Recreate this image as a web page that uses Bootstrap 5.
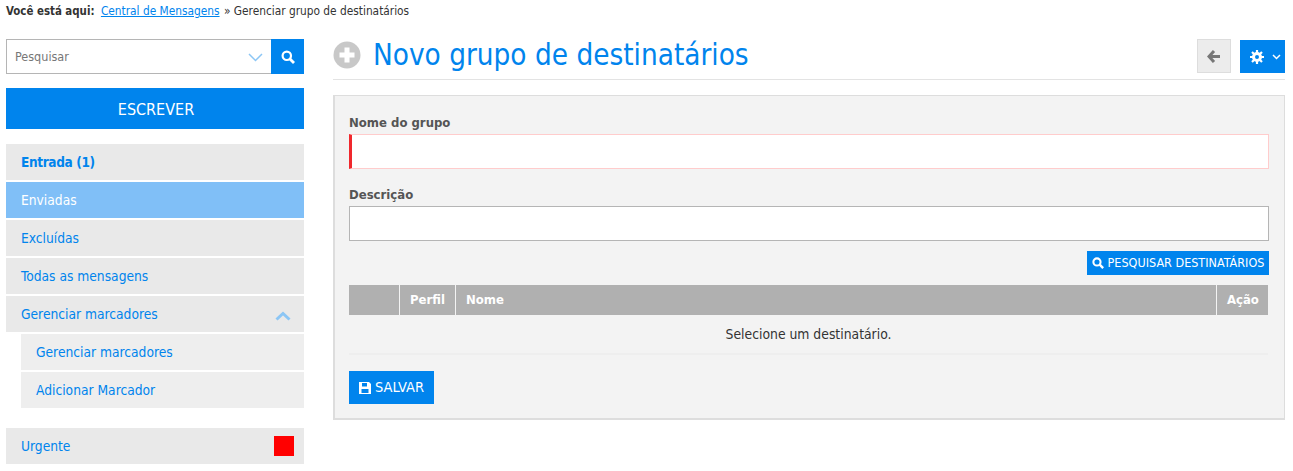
<!DOCTYPE html>
<html lang="pt-BR">
<head>
<meta charset="utf-8">
<title>Novo grupo de destinatários</title>
<link rel="stylesheet" href="https://cdn.jsdelivr.net/npm/bootstrap@5.3.0/dist/css/bootstrap.min.css">
<style>
html,body{height:471px;overflow:hidden}
body{font-family:"DejaVu Sans Condensed","DejaVu Sans",sans-serif;font-stretch:condensed;font-size:13px;color:#333;background:#fff;padding:0 8px 0 6px}
a{color:#0084ed;text-decoration:none}
.crumbs{height:39px;padding-top:3px;font-size:11.8px;line-height:16px;color:#333}
.crumbs b{margin-right:3px;font-size:11.4px}
.crumbs a{text-decoration:underline;margin-right:1px}
.side{width:298px;flex:none;margin-right:29px}
.searchbox{height:35px;margin-bottom:14px}
.searchfield{border:1px solid #b5b5b5;border-width:1px 0 1px 1px;flex:1;padding:1px 0 0 8px;font-size:12.5px;color:#777}
.searchgo{width:33px;background:#0084ed}
.writebtn{display:block;height:41px;line-height:43px;background:#0084ed;color:#fff;font-size:16px;text-align:center;margin-bottom:15px;border-radius:0;padding-left:2px}
.menuitem{height:36px;margin-bottom:2px;background:#e9e9e9;padding:0 10px 0 15px;line-height:36px;font-size:13.7px}
.menuitem.on{background:#80bff7;color:#fff}
.menuitem.sub{margin-left:15px;background:#eee}
.menuitem.strong{font-weight:700;font-size:13.5px;letter-spacing:-.35px}
.colorchip{width:20px;height:20px;background:#f00}
.chevup{margin-right:3px;margin-top:3px}
.urgentgap{margin-bottom:20px}
.mainarea{flex:1;min-width:0}
.titlebar{height:41px;border-bottom:1px solid #e3e3e3;margin-bottom:15px}
.titleicon{margin-top:2px}
.pagetitle{font-size:29.4px;line-height:32px;font-weight:400;color:#0084ed;margin:0 0 0 12px}
.backbtn{width:34px;height:34px;background:#ececec;border:1px solid #ddd;margin-right:9px;padding:0;border-radius:0}
.gearbtn{width:45px;height:33px;background:#0084ed;border:0;padding:0 0 0 5px;border-radius:0;margin-top:1px}
.panelbox{height:325px;background:#f3f3f3;border:1px solid #ddd;border-width:1px 1px 2px 2px;padding:17px 15px 0 14px}
.fieldlabel{font-weight:700;color:#555;font-size:13px;line-height:20px;margin-bottom:1px;display:block}
.fieldinput{height:35px;border:1px solid #b5b5b5;border-radius:0;background:#fff;margin-bottom:16px;padding:0}
.fieldinput.invalid{border:1px solid #fcc;border-left:3px solid #f0282d}
.pickrow{margin-top:10px}
.blue{background:#0084ed;color:#fff;border:0;border-radius:0;padding:0;font-size:13px}
.blue:hover{background:#0084ed;color:#fff}
.pickbtn{width:182px;height:24px;font-size:12.5px;line-height:24px;white-space:nowrap}
.gridtable{width:919px;table-layout:fixed;margin:10px 0 0;border-collapse:separate;border-spacing:0;background:transparent}
.gridtable th{background:#b0b0b0;color:#fff;font-size:13px;font-weight:700;height:30px;padding:0 10px;border:0;border-right:1px solid #f3f3f3;vertical-align:middle}
.gridtable th:last-child{border-right:0}
.gridtable td{background:transparent;text-align:center;height:40px;padding:0;border:0;border-bottom:2px solid #eee;color:#333;font-size:13.8px;vertical-align:middle;box-shadow:none}
.savebtn{width:85px;height:33px;margin-top:16px;line-height:33px;font-size:14.5px}
</style>
</head>
<body>
<div class="crumbs"><b>Você está aqui:</b> <a href="#">Central de Mensagens</a> » Gerenciar grupo de destinatários</div>
<div class="d-flex">
  <div class="side">
    <div class="searchbox d-flex">
      <div class="searchfield d-flex align-items-center justify-content-between">
        <span>Pesquisar</span>
        <svg class="me-2" width="15" height="9" viewBox="0 0 15 9"><path d="M1 1l6.500 6.500L14 1" fill="none" stroke="#8cc6f5" stroke-width="1.500"/></svg>
      </div>
      <div class="searchgo d-flex align-items-center justify-content-center">
        <svg width="14" height="14" viewBox="0 0 14 14"><circle cx="5.800" cy="5.800" r="4.200" fill="none" stroke="#fff" stroke-width="2.200"/><path d="M9 9l4 4" stroke="#fff" stroke-width="2.800"/></svg>
      </div>
    </div>
    <a class="writebtn" href="#">ESCREVER</a>
    <a class="menuitem strong d-block" href="#">Entrada (1)</a>
    <a class="menuitem on d-block" href="#">Enviadas</a>
    <a class="menuitem d-block" href="#">Excluídas</a>
    <a class="menuitem d-block" href="#">Todas as mensagens</a>
    <a class="menuitem d-flex justify-content-between align-items-center" href="#">
      <span>Gerenciar marcadores</span>
      <svg class="chevup" width="16" height="10" viewBox="0 0 16 10"><path d="M1.500 8.500L8 2.500l6.500 6" fill="none" stroke="#8cc6f5" stroke-width="3"/></svg>
    </a>
    <a class="menuitem sub d-block" href="#">Gerenciar marcadores</a>
    <a class="menuitem sub d-block urgentgap" href="#">Adicionar Marcador</a>
    <a class="menuitem d-flex justify-content-between align-items-center" href="#">
      <span>Urgente</span><span class="colorchip"></span>
    </a>
  </div>
  <div class="mainarea">
    <div class="titlebar d-flex align-items-start">
      <svg class="titleicon" width="28" height="28" viewBox="0 0 28 28"><circle cx="14" cy="14" r="13.500" fill="#c8c8c8"/><path d="M14 6.500v15M6.500 14h15" stroke="#fff" stroke-width="5"/></svg>
      <h1 class="pagetitle flex-grow-1">Novo grupo de destinatários</h1>
      <button class="backbtn d-flex align-items-center justify-content-center" type="button">
        <svg width="14" height="13" viewBox="0 0 14 13"><path d="M7 1L2 6.500 7 12M2.500 6.500H13" fill="none" stroke="#777" stroke-width="3"/></svg>
      </button>
      <button class="gearbtn d-flex align-items-center justify-content-center gap-2" type="button">
        <svg width="14" height="14" viewBox="0 0 14 14"><circle cx="7" cy="7" r="3.500" fill="none" stroke="#fff" stroke-width="3"/><path d="M7 0v3M7 11v3M0 7h3M11 7h3M2 2l2 2M10 10l2 2M12 2l-2 2M4 10l-2 2" stroke="#fff" stroke-width="2.200"/></svg>
        <svg width="9" height="6" viewBox="0 0 9 6"><path d="M1 1l3.500 3.500L8 1" fill="none" stroke="#fff" stroke-width="1.500"/></svg>
      </button>
    </div>
    <div class="panelbox">
      <label class="fieldlabel">Nome do grupo</label>
      <div class="fieldinput invalid"></div>
      <label class="fieldlabel">Descrição</label>
      <div class="fieldinput mb-0"></div>
      <div class="pickrow d-flex justify-content-end">
        <button class="btn blue pickbtn d-flex align-items-center justify-content-center gap-1" type="button">
          <svg width="12" height="12" viewBox="0 0 14 14"><circle cx="5.800" cy="5.800" r="4.200" fill="none" stroke="#fff" stroke-width="2.400"/><path d="M9 9l4 4" stroke="#fff" stroke-width="2.800"/></svg>
          PESQUISAR DESTINATÁRIOS
        </button>
      </div>
      <table class="table gridtable">
        <colgroup><col style="width:51px"><col style="width:56px"><col style="width:761px"><col style="width:51px"></colgroup>
        <thead><tr><th></th><th>Perfil</th><th>Nome</th><th>Ação</th></tr></thead>
        <tbody><tr><td colspan="4">Selecione um destinatário.</td></tr></tbody>
      </table>
      <button class="btn blue savebtn d-flex align-items-center justify-content-center gap-1" type="button">
        <svg width="12" height="12" viewBox="0 0 12 12"><path fill="#fff" fill-rule="evenodd" d="M0 0h10l2 2v10H0zM3 1v3.500h5V1zM2.500 7v4h7V7z"/></svg>
        SALVAR
      </button>
    </div>
  </div>
</div>
<script src="https://cdn.jsdelivr.net/npm/bootstrap@5.3.0/dist/js/bootstrap.bundle.min.js"></script>
</body>
</html>
